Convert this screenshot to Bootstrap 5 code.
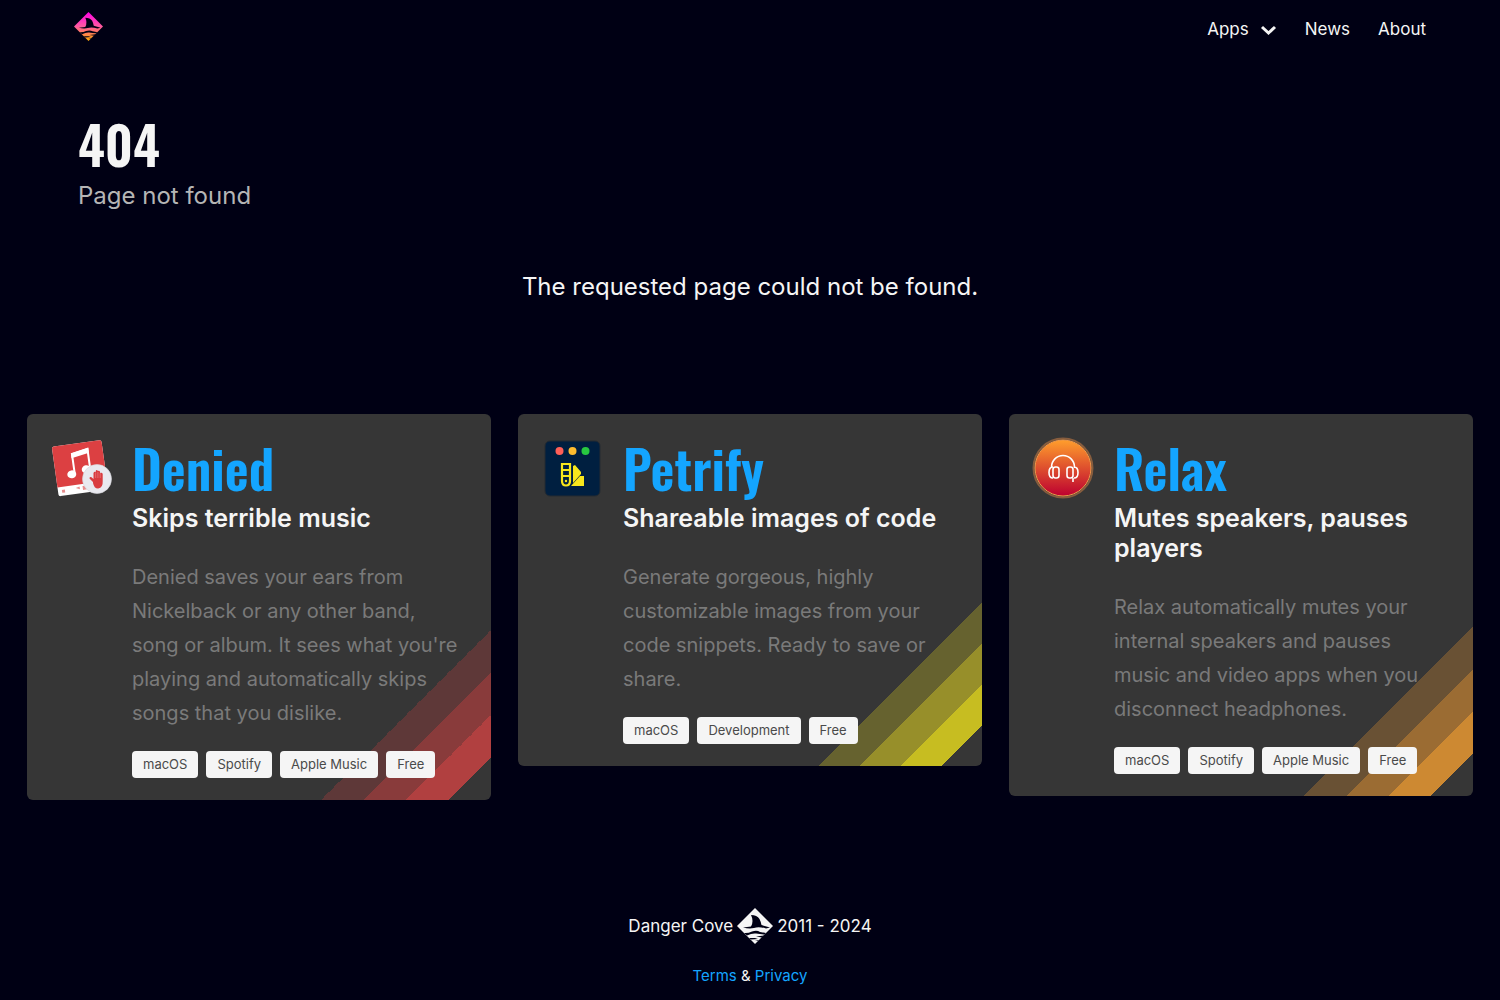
<!DOCTYPE html>
<html lang="en">
<head>
<meta charset="utf-8">
<meta name="viewport" content="width=device-width, initial-scale=1">
<title>404 - Danger Cove</title>
<link href="https://cdn.jsdelivr.net/npm/bootstrap@5.3.0/dist/css/bootstrap.min.css" rel="stylesheet">
<style>
body{background:#000014;color:#f5f5f5;font-family:Inter,"Liberation Sans",sans-serif;font-size:17px;line-height:27px}
a{color:#14a5ff;text-decoration:none}
.site-nav{padding:0 60px;min-height:59px}
.site-nav .nav-link{color:#f5f5f5;padding:0 14px}
.site-nav .chevron{margin-left:11px}
.brand{padding:0 14px 7px}
.display-face{font-family:Oswald,"Roboto Condensed","Liberation Sans Narrow",sans-serif;font-weight:600;font-size:52px;line-height:60px;margin:0}
.hero{padding:55px 78px 0}
.hero-sub{color:#b5b5b5;font-size:24px;line-height:34px;margin:5px 0 0}
.message{font-size:24px;line-height:40px;padding:54px 27px 107px;margin:0}
.apps{padding:0 27px}
.apps .row{--bs-gutter-x:27px;--bs-gutter-y:27px}
.app-card{background:#363636;border-radius:6px;padding:24px 27px 22px 22px}
.app-card .app-icon{width:64px;height:64px;margin:-2px 19px 0 0}
.app-card h2{font-size:25px;line-height:30px;font-weight:600;margin:5px 0 27px}
.app-card .app-text{font-size:20px;line-height:34px;color:#7a7a7a;margin:0 0 21px}
.stripes-red{background:linear-gradient(135deg,#363636 80%,#5e3838 80% 85%,#893b3b 85% 90%,#b14040 90% 95%,#363636 95%)}
.stripes-yellow{background:linear-gradient(135deg,#363636 80%,#66622f 80% 85%,#978f2a 85% 90%,#c7bd21 90% 95%,#363636 95%)}
.stripes-orange{background:linear-gradient(135deg,#363636 80%,#695134 80% 85%,#9b6c33 85% 90%,#cd8932 90% 95%,#363636 95%)}
.app-tag{background:#f5f5f5;color:#4a4a4a;border-radius:4px;font-size:13px;line-height:27px;padding:0 11px}
.tag-row{gap:8px}
.site-foot{padding:108px 27px 10px}
.site-foot .legal{font-size:15px;line-height:24px;margin-top:20px}
</style>
</head>
<body>
<svg width="0" height="0" class="position-absolute" aria-hidden="true">
<defs>
<linearGradient id="sunset" x1="0" y1="0" x2="0" y2="1"><stop offset="0" stop-color="#ff00e6"/><stop offset=".5" stop-color="#ff5aa0"/><stop offset="1" stop-color="#ffaa00"/></linearGradient>
<path id="cove-base" d="M18 0 36 18 18 36 0 18Z"/>
<path id="cove-fin" fill="#000014" d="M14 7Q20 7 22.500 11 24 14 24.500 17L33 19.500 29 20.500Q22 18.500 17 20 12 21 6 19.500L14 18.500Q17 13 14 7ZM7 25Q11 25.500 15 23.500 20 22 23 24L29 25 27.500 26.500Q23 26 19 25.500 15 25 10 27.500ZM19 28.500 27 27.500 25 29.500ZM12 30 18 30 21 31 14 31.500ZM18 33 22 32 21 33Z"/>
</defs>
</svg>
<nav class="site-nav d-flex align-items-center justify-content-between" aria-label="Main">
<a class="brand d-flex" href="#" aria-label="Danger Cove"><svg width="29" height="29" viewBox="0 0 36 36"><use href="#cove-base" fill="url(#sunset)"/><use href="#cove-fin"/></svg></a>
<div class="d-flex align-items-center">
<a class="nav-link d-flex align-items-center" href="#">Apps<svg class="chevron" width="17" height="12" viewBox="0 0 17 12"><path d="M2 3l6.500 6L15 3" fill="none" stroke="#f5f5f5" stroke-width="3"/></svg></a>
<a class="nav-link" href="#">News</a>
<a class="nav-link" href="#">About</a>
</div>
</nav>
<main>
<header class="hero">
<h1 class="display-face">404</h1>
<p class="hero-sub">Page not found</p>
</header>
<p class="message text-center">The requested page could not be found.</p>
<section class="apps">
<div class="row align-items-start">
<div class="col-12 col-lg-4"><article class="app-card stripes-red d-flex align-items-start">
<svg class="app-icon flex-shrink-0" viewBox="0 0 64 64"><g transform="rotate(-8 32 32)"><rect x="6" y="7" width="50" height="50" rx="2" fill="#fff"/><path d="M6 9q0-2 2-2h46q2 0 2 2v39H6Z" fill="#dc4042"/><path d="M25 36V17l16-3v19" fill="none" stroke="#fff" stroke-width="2"/><path d="M24 16l18-3v5l-18 3Z" fill="#fff"/><ellipse cx="22" cy="37" rx="4.500" ry="4" fill="#fff"/><ellipse cx="37" cy="34" rx="4.500" ry="4" fill="#fff"/><path d="M10 51h3v3h-3zM24 51l4-1v3zM31 50h4v4h-4z" fill="#e68d8d"/></g><circle cx="48" cy="43" r="14.500" fill="#e9e9ef" stroke="#d6d6dc" stroke-width=".6"/><path d="M44 46l-3.500-3.500q0-2 2-1.200l2 1.700v-6q1-2 2.200-.5v-1.500q1-2 2.200 0 1.400-1 2.200 1v1q2-1 2.600 1v7q.4 7-4.500 7.500-4 .2-5.200-5.500Z" fill="#d93c40"/><path d="M46.700 37v5M48.900 36v6M51.200 37v5" stroke="#ee9a9c" stroke-width=".5"/></svg>
<div class="flex-grow-1"><a class="display-face d-block" href="#">Denied</a>
<h2>Skips terrible music</h2>
<p class="app-text">Denied saves your ears from Nickelback or any other band, song or album. It sees what you're playing and automatically skips songs that you dislike.</p>
<div class="tag-row d-flex flex-wrap"><span class="app-tag">macOS</span><span class="app-tag">Spotify</span><span class="app-tag">Apple Music</span><span class="app-tag">Free</span></div></div>
</article></div>
<div class="col-12 col-lg-4"><article class="app-card stripes-yellow d-flex align-items-start">
<svg class="app-icon flex-shrink-0" viewBox="0 0 64 64"><rect x="5" y="5" width="55" height="55" rx="5" fill="#001f40" stroke="#242a31"/><circle cx="19.500" cy="15" r="4" fill="#ff5f57"/><circle cx="32.500" cy="15" r="4" fill="#febc2e"/><circle cx="45.500" cy="15" r="4" fill="#28c840"/><path d="M22 28h8v17q0 4.500-4 4.500T22 45ZM22 34h8M22 40h8" fill="none" stroke="#f8e71c" stroke-width="2.200"/><circle cx="26" cy="45" r="1.200" fill="#f8e71c"/><path d="M33 30l2-1 6 7v2l-8 9ZM31 50l9-10h4v10Z" fill="#f8e71c"/></svg>
<div class="flex-grow-1"><a class="display-face d-block" href="#">Petrify</a>
<h2>Shareable images of code</h2>
<p class="app-text">Generate gorgeous, highly customizable images from your code snippets. Ready to save or share.</p>
<div class="tag-row d-flex flex-wrap"><span class="app-tag">macOS</span><span class="app-tag">Development</span><span class="app-tag">Free</span></div></div>
</article></div>
<div class="col-12 col-lg-4"><article class="app-card stripes-orange d-flex align-items-start">
<svg class="app-icon flex-shrink-0" viewBox="0 0 64 64"><defs><linearGradient id="ember" x1="0" y1="0" x2="0" y2="1"><stop offset="0" stop-color="#ff9e2c"/><stop offset="1" stop-color="#bd0030"/></linearGradient></defs><circle cx="32" cy="32" r="29.500" fill="none" stroke="#d88445" stroke-opacity=".5" stroke-width="2"/><circle cx="32" cy="32" r="28" fill="url(#ember)" stroke="#f2994a"/><path d="M20.500 32v-1a11.500 11.500 0 0 1 23 0v1M22 31q-4 0-4 5.500t4 5.500M43 31q4 0 4 5.500T43 42M42 42v4" fill="none" stroke="#fff" stroke-width="1.600"/><rect x="22" y="31" width="6" height="11" rx="2.500" fill="none" stroke="#fff" stroke-width="1.600"/><rect x="36" y="31" width="6" height="11" rx="2.500" fill="none" stroke="#fff" stroke-width="1.600"/></svg>
<div class="flex-grow-1"><a class="display-face d-block" href="#">Relax</a>
<h2>Mutes speakers, pauses players</h2>
<p class="app-text">Relax automatically mutes your internal speakers and pauses music and video apps when you disconnect headphones.</p>
<div class="tag-row d-flex flex-wrap"><span class="app-tag">macOS</span><span class="app-tag">Spotify</span><span class="app-tag">Apple Music</span><span class="app-tag">Free</span></div></div>
</article></div>
</div>
</section>
</main>
<footer class="site-foot text-center">
<div class="d-flex justify-content-center align-items-center">Danger Cove<svg class="mx-1" width="36" height="36" viewBox="0 0 36 36"><use href="#cove-base" fill="#f5f5f5"/><use href="#cove-fin"/></svg>2011 - 2024</div>
<div class="legal"><a href="#">Terms</a> &amp; <a href="#">Privacy</a></div>
</footer>
<script src="https://cdn.jsdelivr.net/npm/bootstrap@5.3.0/dist/js/bootstrap.bundle.min.js"></script>
</body>
</html>
